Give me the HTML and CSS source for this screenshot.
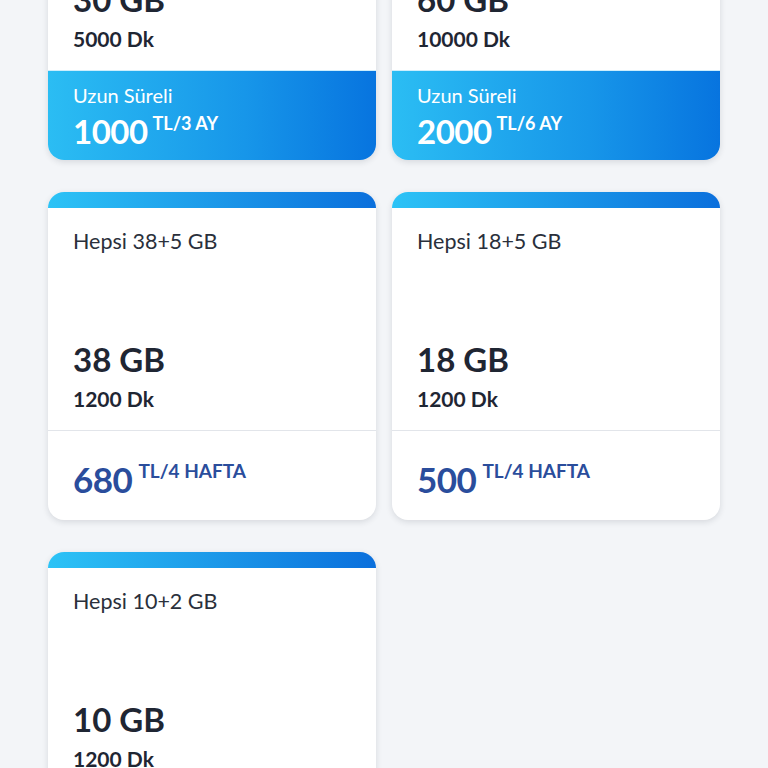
FILE: index.html
```html
<!DOCTYPE html>
<html lang="tr">
<head>
<meta charset="utf-8">
<link rel="stylesheet" href="styles.css">
</head>
<body>
<div class="page">
  <div class="grid">
    <div class="card">
      <div class="bar"></div>
      <div class="body">
        <div class="title">Hepsi 30 GB Uzun Süreli</div>
        <div class="gb">30 GB</div>
        <div class="dk">5000 Dk</div>
      </div>
      <div class="promo">
        <div class="promo-label">Uzun Süreli</div>
        <div class="price"><span class="amount">1000</span><span class="unit">TL/3 AY</span></div>
      </div>
    </div>
    <div class="card">
      <div class="bar"></div>
      <div class="body">
        <div class="title">Hepsi 60 GB Uzun Süreli</div>
        <div class="gb">60 GB</div>
        <div class="dk">10000 Dk</div>
      </div>
      <div class="promo">
        <div class="promo-label">Uzun Süreli</div>
        <div class="price"><span class="amount">2000</span><span class="unit">TL/6 AY</span></div>
      </div>
    </div>
    <div class="card">
      <div class="bar"></div>
      <div class="body">
        <div class="title">Hepsi 38+5 GB</div>
        <div class="gb">38 GB</div>
        <div class="dk">1200 Dk</div>
      </div>
      <div class="foot">
        <div class="price"><span class="amount">680</span><span class="unit">TL/4 HAFTA</span></div>
      </div>
    </div>
    <div class="card">
      <div class="bar"></div>
      <div class="body">
        <div class="title">Hepsi 18+5 GB</div>
        <div class="gb">18 GB</div>
        <div class="dk">1200 Dk</div>
      </div>
      <div class="foot">
        <div class="price"><span class="amount">500</span><span class="unit">TL/4 HAFTA</span></div>
      </div>
    </div>
    <div class="card">
      <div class="bar"></div>
      <div class="body">
        <div class="title">Hepsi 10+2 GB</div>
        <div class="gb">10 GB</div>
        <div class="dk">1200 Dk</div>
      </div>
      <div class="foot">
        <div class="price"><span class="amount">250</span><span class="unit">TL/4 HAFTA</span></div>
      </div>
    </div>
  </div>
</div>
</body>
</html>
```
FILE: styles.css
```css
html, body {
  margin: 0;
  padding: 0;
  background: #f3f5f8;
  overflow: hidden;
}
body {
  font-family: "Lato", "Noto Sans", sans-serif;
  color: #1f2633;
}
.page {
  width: 768px;
  height: 768px;
  overflow: hidden;
}
.grid {
  display: grid;
  grid-template-columns: 328px 328px;
  column-gap: 16px;
  row-gap: 32px;
  padding: 0 48px;
  margin-top: -168px;
}
.card {
  background: #fff;
  border-radius: 16px;
  overflow: hidden;
  box-shadow: 0 2px 6px rgba(20, 30, 50, 0.13);
  display: flex;
  flex-direction: column;
}
.bar {
  height: 16px;
  background: linear-gradient(90deg, #2cc3f6 0%, #0b6fdc 100%);
}
.body {
  height: 222px;
  box-sizing: border-box;
  padding: 20px 24px 18px 25px;
  display: flex;
  flex-direction: column;
}
.title {
  font-size: 21.5px;
  line-height: 26px;
  font-weight: 400;
  color: #2a303b;
  flex: 1;
}
.gb {
  font-size: 33px;
  line-height: 38px;
  font-weight: 700;
  color: #1f2633;
}
.dk {
  font-size: 21px;
  line-height: 26px;
  font-weight: 700;
  color: #1f2633;
  margin-top: 8px;
}
.foot {
  border-top: 1px solid #e2e5ea;
  height: 90px;
  box-sizing: border-box;
  padding: 28px 24px 0 25px;
}
.price {
  display: flex;
  align-items: flex-start;
}
.amount {
  font-size: 35px;
  line-height: 40px;
  font-weight: 700;
  letter-spacing: -0.5px;
}
.unit {
  font-size: 19px;
  line-height: 22px;
  font-weight: 700;
  margin-left: 6px;
  margin-top: 1px;
}
.foot .price {
  color: #2a4d9c;
}
.promo {
  height: 90px;
  box-sizing: border-box;
  padding: 12px 24px 0 25px;
  border-top: 1px solid #cdeefc;
  background: linear-gradient(90deg, #2bbdf3 0%, #1796e9 60%, #0774df 100%);
  color: #fff;
}
.promo-label {
  font-size: 20px;
  line-height: 24px;
  font-weight: 400;
}
.promo .price {
  margin-top: 4px;
}
.promo .amount {
  font-size: 33px;
}
.promo .unit {
  font-size: 18px;
  margin-left: 5px;
}
```
